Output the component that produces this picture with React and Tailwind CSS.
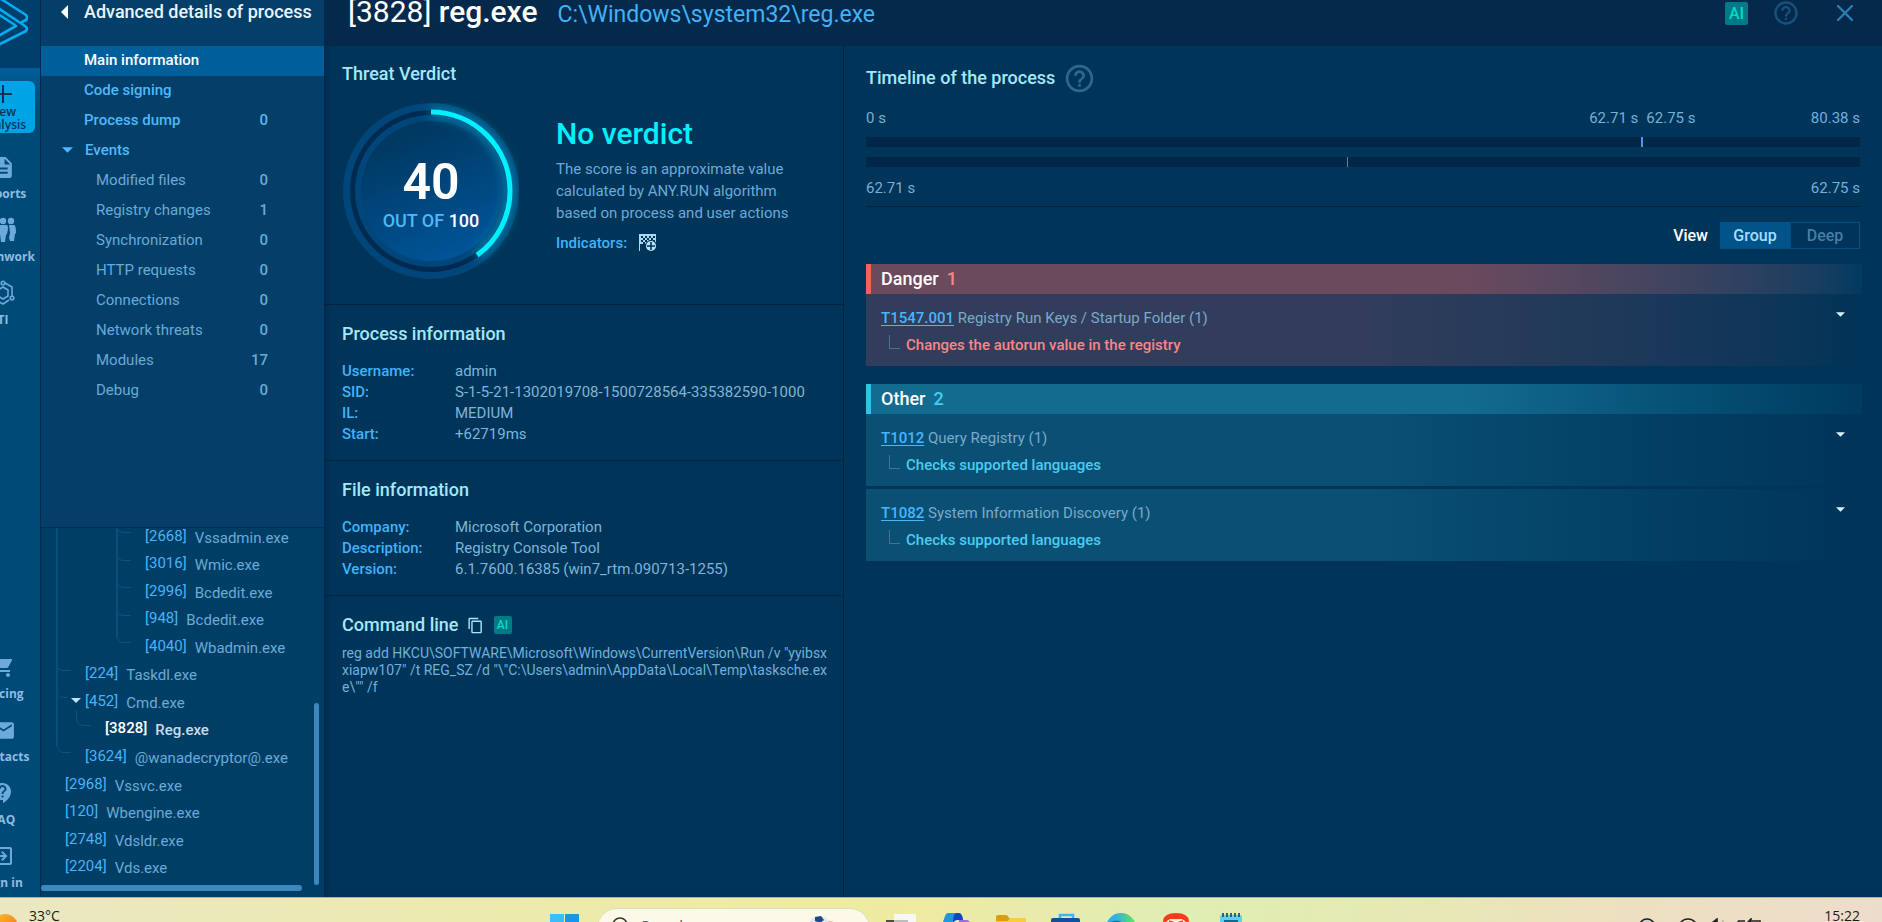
import React, { useState } from "react";
import {
  MdContactSupport,
  MdContentCopy,
  MdDescription,
  MdEmail,
  MdExitToApp,
  MdHelpOutline,
  MdShoppingCart,
} from "react-icons/md";

const events = [
  { name: "Modified files", count: 0 },
  { name: "Registry changes", count: 1 },
  { name: "Synchronization", count: 0 },
  { name: "HTTP requests", count: 0 },
  { name: "Connections", count: 0 },
  { name: "Network threats", count: 0 },
  { name: "Modules", count: 17 },
  { name: "Debug", count: 0 },
];

const processes = [
  { pid: 2668, name: "Vssadmin.exe", indent: "pl-[104px]" },
  { pid: 3016, name: "Wmic.exe", indent: "pl-[104px]" },
  { pid: 2996, name: "Bcdedit.exe", indent: "pl-[104px]" },
  { pid: 948, name: "Bcdedit.exe", indent: "pl-[104px]" },
  { pid: 4040, name: "Wbadmin.exe", indent: "pl-[104px]" },
  { pid: 224, name: "Taskdl.exe", indent: "pl-11" },
  { pid: 452, name: "Cmd.exe", indent: "pl-11" },
  { pid: 3828, name: "Reg.exe", indent: "pl-16" },
  { pid: 3624, name: "@wanadecryptor@.exe", indent: "pl-11" },
  { pid: 2968, name: "Vssvc.exe", indent: "pl-6" },
  { pid: 120, name: "Wbengine.exe", indent: "pl-6" },
  { pid: 2748, name: "Vdsldr.exe", indent: "pl-6" },
  { pid: 2204, name: "Vds.exe", indent: "pl-6" },
];

const processInfo = [
  ["Username:", "admin"],
  ["SID:", "S-1-5-21-1302019708-1500728564-335382590-1000"],
  ["IL:", "MEDIUM"],
  ["Start:", "+62719ms"],
];

const fileInfo = [
  ["Company:", "Microsoft Corporation"],
  ["Description:", "Registry Console Tool"],
  ["Version:", "6.1.7600.16385 (win7_rtm.090713-1255)"],
];

const commandLine = [
  'reg add HKCU\\SOFTWARE\\Microsoft\\Windows\\CurrentVersion\\Run /v "yyibsx',
  'xiapw107" /t REG_SZ /d "\\"C:\\Users\\admin\\AppData\\Local\\Temp\\tasksche.ex',
  'e\\"" /f',
].join("\n");

const groups = [
  {
    title: "Danger",
    head: "border-[#f4605f] bg-linear-to-r from-[#6b4a5e] from-60% to-[#003b60]",
    body: "bg-linear-to-r from-[#313d5b] from-50% to-[#003458]",
    accent: "text-[#fa8587]",
    items: [
      {
        id: "T1547.001",
        name: "Registry Run Keys / Startup Folder (1)",
        text: "Changes the autorun value in the registry",
      },
    ],
  },
  {
    title: "Other",
    head: "border-[#33c1e8] bg-linear-to-r from-[#136b90] from-60% to-[#003b60]",
    body: "bg-linear-to-r from-[#0a5075] from-50% to-[#003458]",
    accent: "text-[#4accf0]",
    items: [
      { id: "T1012", name: "Query Registry (1)", text: "Checks supported languages" },
      {
        id: "T1082",
        name: "System Information Discovery (1)",
        text: "Checks supported languages",
      },
    ],
  },
];

const Logo = () => (
  <svg width="28" height="48" viewBox="0 0 28 48" fill="none" stroke="#00adef" strokeWidth="2.6" strokeLinejoin="round" strokeLinecap="round">
    <path d="M-2 -3 L26 15 Q28 18 26 20 L22 22" />
    <path d="M-2 8 L25 26 Q28 28 26 31 L-2 45" />
    <path d="M-2 36 L16 26" />
    <path d="M-2 14 L15 25" />
  </svg>
);

const TeamIcon = () => (
  <svg width="28" height="26" viewBox="0 0 28 26" fill="currentColor">
    <circle cx="5" cy="4" r="3.2" />
    <circle cx="14" cy="4" r="3.2" />
    <circle cx="22" cy="4" r="3.2" />
    <path d="M2 8h6l1 8-2 1-1 8H4l-1-8-2-1z" />
    <path d="M10 8h7c2 0 2 2 2 4l-1 5-1 1-1 7h-4l-1-8-2-1z" />
    <path d="M20 8h5c2 0 2 6 2 8l-1 1-1 7h-4l-1-3 1-5z" />
  </svg>
);

const IntelIcon = () => (
  <svg width="26" height="26" viewBox="0 0 26 26" fill="none" stroke="currentColor" strokeWidth="1.6">
    <path d="M13 7l5 3v6l-5 3-5-3v-6z" />
    <path d="M15 3l7 4v9M19 20l-6 4-9-5v-4M4 12V7l5-3" />
    <circle cx="13" cy="3" r="1.8" />
    <circle cx="22" cy="18" r="1.8" />
    <circle cx="4" cy="13" r="1.4" />
  </svg>
);

const FlagIcon = () => (
  <svg width="18" height="18" viewBox="0 0 18 18">
    <path d="M0 0h17v9a5 5 0 0 0-8 1H1v7H0z" fill="#a9d8f5" />
    <path
      d="M2 2h2v2H2zM6 2h2v2H6zM10 2h2v2h-2zM14 2h2v2h-2zM4 4h2v2H4zM8 4h2v2H8zM12 4h2v2h-2zM2 6h2v2H2zM6 6h2v2H6zM10 6h2v2h-2zM14 6h2v2h-2zM4 8h2v2H4z"
      fill="#003458"
    />
    <circle cx="12" cy="12" r="6" fill="#003458" />
    <circle cx="12" cy="12" r="5" fill="#b8e4fb" />
    <path d="M12 8v8M8 12h8" stroke="#003458" strokeWidth="1.6" />
  </svg>
);

const Caret = ({ className }) => (
  <svg viewBox="0 0 10 5" className={className} fill="currentColor">
    <path d="M0 0h10L5 5z" />
  </svg>
);

const RailLink = ({ icon, label }) => (
  <a href="#" className="flex flex-col items-center text-[#6caadb]">
    <span className="flex h-[26px] items-center">{icon}</span>
    <span className="mt-1 text-xs leading-5 font-bold text-[#8bbde4]">{label}</span>
  </a>
);

const Rail = () => (
  <aside className="flex w-[41px] shrink-0 justify-end overflow-hidden border-r border-[#032a4a] bg-[#004a78] font-['Open_Sans',sans-serif]">
    <div className="flex w-[74px] shrink-0 flex-col">
      <div className="flex h-[68px] justify-end bg-[#003f6c] pr-3">
        <Logo />
      </div>
      <div className="flex flex-1 flex-col bg-linear-to-b from-[#005e98] to-[#004a78] to-5% pt-[13px] pb-1">
        <button className="mx-[5px] flex h-[52px] flex-col items-center rounded-md bg-[#00a4e6] pt-1 text-xs leading-[13px] font-semibold text-[#02345a]">
          <svg width="18" height="18" viewBox="0 0 18 18" stroke="currentColor" strokeWidth="2" className="shrink-0">
            <path d="M9 0v18M0 9h18" />
          </svg>
          <span className="mt-0.5">New</span>
          <span>analysis</span>
        </button>
        <nav className="mt-[21px] flex flex-col gap-[13px]">
          <RailLink icon={<MdDescription size={25} />} label="Reports" />
          <RailLink icon={<TeamIcon />} label="Teamwork" />
          <RailLink icon={<IntelIcon />} label="TI" />
        </nav>
        <nav className="mt-auto flex flex-col gap-[13px]">
          <RailLink icon={<MdShoppingCart size={24} />} label="Pricing" />
          <RailLink icon={<MdEmail size={25} />} label="Contacts" />
          <RailLink icon={<MdContactSupport size={24} />} label="FAQ" />
          <RailLink icon={<MdExitToApp size={24} />} label="Sign in" />
        </nav>
      </div>
    </div>
  </aside>
);

const NavRow = ({ name, count, active, onClick }) => (
  <button
    onClick={onClick}
    className={`flex h-[30px] w-full items-center justify-between pr-14 pb-0.5 pl-[43px] text-left text-[15px] font-medium ${
      active ? "bg-[#005f9b] text-white" : "text-[#4db8fa]"
    }`}
  >
    <span>{name}</span>
    {count !== undefined && <span className="text-[#63b5ec]">{count}</span>}
  </button>
);

const TreeLines = () => (
  <svg width="283" height="369" className="pointer-events-none absolute top-0 left-0" fill="none" stroke="#0b5482">
    <path d="M16 0V218M76 0V109" strokeWidth="2" stroke="#0a4f7c" />
    <path d="M77 2Q78 4 82 4.5H90M77 30Q78 32 82 32.5H90M77 57Q78 59 82 59.5H90M77 85Q78 87 82 87.5H90M76 108Q77 114 82 114.5H90" />
    <path d="M17 140Q18 142 22 142.5H30M17 167Q18 169 22 169.5H26M16 217Q17 224 22 224.5H30" />
    <path d="M35.500 182V190Q36 197 42 197.5H50" />
  </svg>
);

const Sidebar = () => {
  const [tab, setTab] = useState("main");

  return (
    <aside className="flex w-[283px] shrink-0 flex-col bg-[#033f69]">
      <header className="flex h-[46px] shrink-0 items-start pl-[19px]">
        <button aria-label="Back" className="flex h-6 w-6 items-center text-white">
          <svg width="8" height="14" viewBox="0 0 8 14" fill="currentColor">
            <path d="M8 0v14L1 7z" />
          </svg>
        </button>
        <h2 className="text-lg leading-6 font-medium whitespace-nowrap text-[#e6f5ff]">
          Advanced details of process
        </h2>
      </header>

      <nav>
        <NavRow name="Main information" active={tab === "main"} onClick={() => setTab("main")} />
        <NavRow name="Code signing" active={tab === "sign"} onClick={() => setTab("sign")} />
        <NavRow name="Process dump" count={0} active={tab === "dump"} onClick={() => setTab("dump")} />
        <button className="flex h-[30px] w-full items-center pb-0.5 pl-[21px] text-[15px] font-medium text-[#4db8fa]">
          <Caret className="mr-3 h-1.5 w-[11px]" />
          Events
        </button>
        {events.map((ev) => (
          <button
            key={ev.name}
            className="flex h-[30px] w-full items-center justify-between pr-14 pb-0.5 pl-[55px] text-[15px] text-[#6aaad6]"
          >
            <span>{ev.name}</span>
            <span className="font-medium">{ev.count}</span>
          </button>
        ))}
      </nav>

      <div className="relative mt-auto h-[370px] shrink-0 overflow-hidden border-t border-[#032c4e] bg-[#013e66]">
        <TreeLines />
        <ul className="-mt-1.5 flex h-[358px] flex-col">
          {processes.map((p) => {
            const current = p.pid === 3828;
            return (
              <li key={p.pid} className={`relative flex flex-1 items-center text-[15px] leading-5 ${p.indent}`}>
                {p.pid === 452 && (
                  <Caret className="absolute left-[30px] h-[5px] w-2.5 text-[#b9e4ff]" />
                )}
                <span className={current ? "font-medium text-white" : "text-[#45b3f6]"}>[{p.pid}]</span>
                <span className={`pt-1 pl-2 ${current ? "font-medium text-[#c9dcea]" : "text-[#6aaad6]"}`}>
                  {p.name}
                </span>
              </li>
            );
          })}
        </ul>
        <div className="absolute right-[5px] bottom-3 h-[182px] w-[5px] rounded-full bg-[#3c87bc]" />
        <div className="absolute bottom-[6px] left-0 h-1.5 w-[261px] rounded-full bg-[#3c87bc]" />
      </div>
    </aside>
  );
};

const Gauge = ({ score }) => {
  const r = 79;
  const len = 2 * Math.PI * r;
  return (
    <div className="grid size-44 shrink-0 place-items-center">
      <svg width="176" height="176" viewBox="0 0 176 176" className="col-start-1 row-start-1" fill="none">
        <defs>
          <linearGradient id="disc" x1="0.3" y1="0" x2="0.7" y2="1">
            <stop offset="0.1" stopColor="#003962" />
            <stop offset="1" stopColor="#00559a" />
          </linearGradient>
          <filter id="glow" x="-20%" y="-20%" width="140%" height="140%">
            <feGaussianBlur stdDeviation="6" />
          </filter>
        </defs>
        <circle cx="88" cy="88" r="88" fill="#00467a" />
        <circle cx="88" cy="88" r="81" fill="#002b50" />
        <circle cx="88" cy="88" r="76" fill="#00467a" />
        <circle cx="88" cy="88" r="70" fill="url(#disc)" />
        <g transform="rotate(-90 88 88)" strokeDasharray={`${(len * score) / 100} ${len}`}>
          <circle cx="88" cy="88" r={r} stroke="#00d8f0" strokeWidth="7" opacity="0.6" filter="url(#glow)" />
          <circle cx="88" cy="88" r={r} stroke="#00f0ff" strokeWidth="5" />
        </g>
      </svg>
      <div className="col-start-1 row-start-1 pt-2.5 text-center">
        <div className="text-[50px] leading-[50px] font-semibold text-white">{score}</div>
        <div className="text-lg leading-7 font-medium text-[#4db8fa]">
          OUT OF <span className="text-white">100</span>
        </div>
      </div>
    </div>
  );
};

const SectionTitle = ({ children }) => (
  <h3 className="text-lg leading-6 font-medium text-[#a3e8fb]">{children}</h3>
);

const InfoBlock = ({ title, rows }) => (
  <section className="border-b border-[#02223d] pt-[17px] pb-[15px] pl-[18px]">
    <SectionTitle>{title}</SectionTitle>
    <dl className="mt-[15px] grid grid-cols-[113px_1fr] text-[15px] leading-[21px]">
      {rows.map(([label, value]) => (
        <React.Fragment key={label}>
          <dt className="font-medium text-[#41b2f8]">{label}</dt>
          <dd className="text-[#7db5d8]">{value}</dd>
        </React.Fragment>
      ))}
    </dl>
  </section>
);

const Details = () => (
  <div className="w-[520px] shrink-0 border-r border-[#02223d]">
    <section className="border-b border-[#02223d] pt-4 pb-[25px] pl-[18px]">
      <SectionTitle>Threat Verdict</SectionTitle>
      <div className="mt-[17px] flex gap-[37px] pl-px">
        <Gauge score={40} />
        <div className="pt-[13px] pr-4">
          <h1 className="text-[30px] leading-9 font-medium text-[#00f0ff]">No verdict</h1>
          <p className="mt-1.5 w-60 text-[15px] leading-[22px] text-[#6aaad6]">
            The score is an approximate value calculated by ANY.RUN algorithm based on process and user actions
          </p>
          <div className="mt-2 flex items-center gap-3 text-[15px] leading-[22px] font-medium text-[#41b2f8]">
            Indicators:
            <FlagIcon />
          </div>
        </div>
      </div>
    </section>

    <InfoBlock title="Process information" rows={processInfo} />
    <InfoBlock title="File information" rows={fileInfo} />

    <section className="pt-[17px] pl-[18px]">
      <div className="flex h-6 items-center gap-2">
        <SectionTitle>Command line</SectionTitle>
        <button aria-label="Copy command line" className="text-[#a3e8fb]">
          <MdContentCopy size={17} />
        </button>
        <button className="ml-0.5 size-[18px] rounded-xs bg-[#007a87] text-xs leading-[18px] font-medium text-[#00dcc0]">
          AI
        </button>
      </div>
      <p className="mt-2 text-sm leading-[17px] whitespace-pre text-[#6fb0dc]">{commandLine}</p>
    </section>
  </div>
);

const Timeline = () => (
  <section className="border-b border-[#02223d] pt-4 pb-2 text-[15px] leading-5 text-[#74b0d8]">
    <div className="flex h-8 items-center gap-2">
      <SectionTitle>Timeline of the process</SectionTitle>
      <button aria-label="About the timeline" className="text-[#2d678d]">
        <MdHelpOutline size={33} />
      </button>
    </div>
    <div className="relative mt-3.5 flex justify-between">
      <span>0 s</span>
      <span className="absolute right-[22%] mr-[3px]">62.71 s</span>
      <span className="absolute left-[78%] ml-[5px]">62.75 s</span>
      <span>80.38 s</span>
    </div>
    <div className="relative mt-[9px] h-2.5 bg-[#002648]">
      <div className="absolute left-[78%] h-full w-0.5 bg-[#4799ee]" />
    </div>
    <div className="relative mt-2.5 h-2.5 bg-[#002648]">
      <div className="absolute left-[48.4%] h-full w-px bg-[#e8474f]" />
    </div>
    <div className="mt-[11px] flex justify-between">
      <span>62.71 s</span>
      <span>62.75 s</span>
    </div>
  </section>
);

const Group = ({ group }) => (
  <section className="-mr-0.5">
    <h3 className={`flex h-[30px] items-center gap-2 border-l-[5px] pl-2.5 text-lg font-medium text-white ${group.head}`}>
      {group.title}
      <span className={group.accent}>{group.items.length}</span>
    </h3>
    <div className="flex flex-col gap-[3px]">
      {group.items.map((item) => (
        <div key={item.id} className={`flex items-start justify-between pt-3.5 pr-[17px] pb-[11px] pl-[15px] text-[15px] leading-5 ${group.body}`}>
          <div>
            <div className="text-[#7ba9c8]">
              <a href="#" className="font-medium text-[#47b6fc] underline underline-offset-2">
                {item.id}
              </a>{" "}
              {item.name}
            </div>
            <div className={`mt-[7px] flex gap-1.5 pl-2 font-medium ${group.accent}`}>
              <span className="h-3.5 w-[11px] border-b border-l border-[#4c7190]" />
              {item.text}
            </div>
          </div>
          <button aria-label="Expand" className="mt-1 text-[#d9f0ff]">
            <Caret className="h-[5px] w-[9px]" />
          </button>
        </div>
      ))}
    </div>
  </section>
);

const Activity = () => {
  const [view, setView] = useState("Group");

  return (
    <div className="min-w-0 flex-1 px-[22px]">
      <Timeline />
      <div className="mt-[15px] mb-[15px] flex items-center justify-end">
        <span className="mr-3 text-base leading-6 font-medium text-white">View</span>
        {["Group", "Deep"].map((v) => (
          <button
            key={v}
            onClick={() => setView(v)}
            className={`h-[27px] w-[70px] border border-[#00508a] text-base leading-6 font-medium ${
              view === v ? "bg-[#005489] text-[#a5dfff]" : "text-[#467fa6]"
            }`}
          >
            {v}
          </button>
        ))}
      </div>
      <div className="flex flex-col gap-[18px]">
        {groups.map((g) => (
          <Group key={g.title} group={g} />
        ))}
      </div>
    </div>
  );
};

const Taskbar = () => (
  <footer className="h-[25px] shrink-0 overflow-hidden border-t border-[#a9b3a6] bg-linear-to-r from-[#ebe7c2] via-[#eeec9f] via-45% to-[#eddccb] font-['Open_Sans',sans-serif] text-[#1b1b1b]">
    <div className="flex h-[60px] items-center bg-linear-to-r from-transparent from-50% via-[#dfeeb2] via-63% to-transparent to-85%">
      <div className="flex h-full w-[550px] items-start">
        <svg width="17" height="34" viewBox="0 0 17 34" className="mt-4">
          <defs>
            <linearGradient id="sun" x1="0" y1="0" x2="1" y2="1">
              <stop offset="0" stopColor="#f9c02c" />
              <stop offset="1" stopColor="#ef6a1c" />
            </linearGradient>
          </defs>
          <circle cx="5" cy="13" r="13" fill="url(#sun)" />
        </svg>
        <span className="mt-2 ml-3 text-sm leading-5">33°C</span>
      </div>

      <svg width="29" height="29" viewBox="0 0 29 29">
        <path d="M0 0h14v14H0z" fill="#3dbdf5" />
        <path d="M15 0h14v14H15z" fill="#1f95e0" />
        <path d="M0 15h14v14H0zM15 15h14v14H15z" fill="#0f7ad0" />
      </svg>

      <div className="ml-[18px] flex h-10 w-[273px] items-center rounded-full border border-[#e3dcb8] bg-[#fbf9e8] pl-[13px]">
        <svg width="18" height="18" viewBox="0 0 18 18" fill="none" stroke="#333" strokeWidth="1.6" className="mb-1">
          <circle cx="9" cy="8" r="7" />
          <path d="M14 13l3 4" />
        </svg>
        <input
          aria-label="Search"
          placeholder="Search"
          className="mb-1.5 ml-3 w-[150px] bg-transparent text-[15px] leading-5 placeholder:text-[#555]"
        />
        <svg width="30" height="26" viewBox="0 0 30 26" className="mr-8 ml-auto">
          <path d="M14 5l13 2-4 8-9-2z" fill="#ef7b4f" />
          <circle cx="12" cy="12" r="11" fill="#dfe7f0" />
          <path d="M8 2l6-1 3 4-4 3-5-2zM1 9l4-2 2 4-3 4z" fill="#1f4a86" />
        </svg>
      </div>

      <div className="ml-4 flex shrink-0 gap-[25px]">
        <svg width="30" height="30" viewBox="0 0 30 30">
          <path d="M0 7h22v18H0z" fill="#4d4d4d" />
          <path d="M8 1h22v20H8z" fill="#f7f7f7" />
          <path d="M8 7h14v14H8z" fill="#bdbdbd" />
        </svg>
        <svg width="30" height="30" viewBox="0 0 30 30">
          <path d="M7 0h11q3 0 4 7h-6q-3 0-4 5l-3 10H2Q-2 20 1 12L4 3q1-3 3-3z" fill="#2196dd" />
          <path d="M16 0h2q3 0 4 7h-6q-3 0-4 3 0-10 4-10z" fill="#1645c4" />
          <path d="M1 9h8l-2 10H1z" fill="#36b07a" />
          <path d="M18 7h8q4 1 3 5l-4 12h-9z" fill="#a36be0" />
        </svg>
        <svg width="30" height="30" viewBox="0 0 30 30">
          <path d="M0 4q0-2 2-2h8q2 0 3 3h17v8H0z" fill="#dd9c10" />
          <path d="M0 8h12l2-3h16v20H0z" fill="#fcca44" />
        </svg>
        <svg width="30" height="30" viewBox="0 0 30 30">
          <path d="M9 6V2h13v5" fill="none" stroke="#38b7f0" strokeWidth="2.5" />
          <rect y="5" width="29" height="22" rx="2" fill="#0d529c" />
        </svg>
        <svg width="30" height="30" viewBox="0 0 30 30">
          <defs>
            <linearGradient id="wave" x1="0" x2="1">
              <stop offset="0.3" stopColor="#2fb1e6" />
              <stop offset="0.9" stopColor="#5fdd63" />
            </linearGradient>
          </defs>
          <circle cx="15" cy="15" r="15" fill="url(#wave)" />
          <path d="M1 11q8-6 15-2l3 6-18 3z" fill="#1479c4" />
        </svg>
        <svg width="30" height="30" viewBox="0 0 30 30">
          <path d="M2 8Q3 0 15 0t13 8l-2 5-5-7H9l-5 7z" fill="#fb3a1c" />
          <path d="M5 9q4-5 9-1h2q5-4 9 1v14H5z" fill="#fff4f0" />
          <path d="M8 8l6 2M22 8l-6 2" stroke="#fb3a1c" strokeWidth="1.5" />
        </svg>
        <svg width="30" height="30" viewBox="0 0 30 30">
          <rect x="4" y="2" width="22" height="26" rx="2" fill="#5fd0ec" />
          <path d="M7 0v4M11 0v4M15 0v4M19 0v4M23 0v4" stroke="#136a8c" strokeWidth="2" />
          <path d="M8 8h14" stroke="#136a8c" strokeWidth="2" />
        </svg>
      </div>

      <div className="ml-auto flex h-full shrink-0 items-start pr-[22px]">
        <svg width="126" height="18" viewBox="0 0 126 18" fill="none" stroke="#222" strokeWidth="1.6" className="mt-5">
          <path d="M1 8q2-7 8-7t8 7" fill="#cfd3da" />
          <path d="M41 7q3-6 9-6t9 6" />
          <path d="M74 5l5-4v12l-5-4" fill="#222" />
          <path d="M84 2q3 3 2 8" stroke="#c3b9a8" />
          <path d="M100 3h7M114 3h8v7M100 3v7" />
          <path d="M109 5l4-4v5" fill="#222" />
        </svg>
        <time className="mt-2 ml-[60px] text-sm leading-5">15:22</time>
      </div>
    </div>
  </footer>
);

export default function App() {
  return (
    <div className="flex h-screen flex-col overflow-hidden bg-[#003458] font-[Roboto,sans-serif]">
      <div className="flex min-h-0 flex-1">
        <Rail />
        <Sidebar />
        <main className="flex min-w-0 flex-1 flex-col shadow-[inset_5px_0_5px_-3px_#00284a]">
          <header className="flex h-[46px] shrink-0 items-start bg-[#04294b] pr-7 pl-6">
            <div className="flex items-baseline gap-5 leading-6">
              <h1 className="text-[30px] leading-6 font-medium text-white">
                <span className="font-normal">[3828]</span> reg.exe
              </h1>
              <span className="text-[23px] leading-6 text-[#41b2f8]">C:\Windows\system32\reg.exe</span>
            </div>
            <div className="ml-auto flex h-[26px] items-center">
              <button className="size-[23px] rounded-xs bg-[#007a87] text-base leading-[23px] font-medium text-[#00dcc0]">
                AI
              </button>
              <button aria-label="Help" className="ml-6 text-[#17527f]">
                <MdHelpOutline size={28} />
              </button>
              <button aria-label="Close" className="ml-9 text-[#2b7db4]">
                <svg width="18" height="18" viewBox="0 0 18 18" stroke="currentColor" strokeWidth="2.4" strokeLinecap="round">
                  <path d="M2 2l14 14M16 2L2 16" />
                </svg>
              </button>
            </div>
          </header>
          <div className="flex min-h-0 flex-1">
            <Details />
            <Activity />
          </div>
        </main>
      </div>
      <Taskbar />
    </div>
  );
}
